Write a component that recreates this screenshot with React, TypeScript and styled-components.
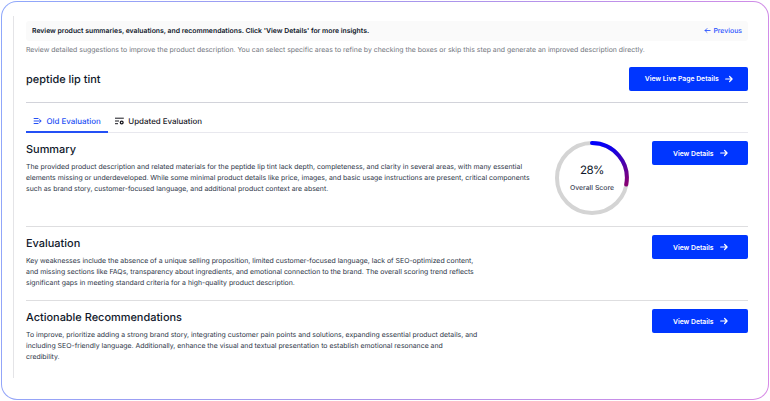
import React from "react";
import styled, { createGlobalStyle } from "styled-components";

const GlobalStyle = createGlobalStyle`
  * { box-sizing: border-box; }
  html, body { margin: 0; padding: 0; background: #fff; }
  body { font-family: Inter, "Liberation Sans", sans-serif; color: #0f172a; text-rendering: geometricPrecision; }
  h1, h2, p { margin: 0; }
  button { font-family: inherit; }
`;

const Page = styled.div`
  width: 770px;
  height: 401px;
  padding: 1px;
  overflow: hidden;
`;

const Frame = styled.div`
  width: 768px;
  height: 399px;
  padding: 14px 0 0 11px;
  border: 1px solid transparent;
  border-radius: 16px;
  background:
    linear-gradient(#fff, #fff) padding-box,
    linear-gradient(100deg, #8fa8fb 0%, #a896ec 50%, #d88ae6 100%) border-box;
`;

const Panel = styled.main`
  height: 362px;
  width: 735px;
  border-left: 1px solid #e4e4e7;
  padding: 5px 0 0 12px;
`;

const Notice = styled.div`
  display: flex;
  align-items: center;
  justify-content: space-between;
  height: 20px;
  padding: 0 6px 0 6px;
  border-radius: 3px;
  background: #fafafa;
`;

const NoticeText = styled.p`
  font-size: 6.86px;
  font-weight: 600;
  line-height: 20px;
  white-space: nowrap;
`;

const BackLink = styled.a`
  display: flex;
  align-items: center;
  gap: 2.5px;
  margin-top: -1px;
  font-size: 6.9px;
  font-weight: 500;
  color: #2952ff;
`;

const Hint = styled.p`
  margin-top: 3px;
  font-size: 6.91px;
  line-height: 11px;
  color: #71757d;
  white-space: nowrap;
`;

const TitleRow = styled.header`
  display: flex;
  justify-content: space-between;
  align-items: center;
  height: 48px;
  border-bottom: 1px solid #d2d3da;
`;

const Title = styled.h1`
  font-size: 10.95px;
  font-weight: 500;
  line-height: 16px;
`;

const Button = styled.button<{ $wide?: boolean }>`
  display: flex;
  flex: none;
  align-items: center;
  justify-content: center;
  gap: 6.5px;
  width: ${(p) => (p.$wide ? 119 : 96)}px;
  height: 24px;
  padding: 0 0 0 1px;
  border: 0;
  border-radius: 2px;
  background: #0036ff;
  color: #fff;
  font-size: 6.8px;
  font-weight: 600;
`;

const Tabs = styled.nav`
  display: flex;
  height: 30px;
  border-bottom: 1px solid #e8e8ee;
`;

const Tab = styled.a<{ $active?: boolean }>`
  display: flex;
  align-items: center;
  gap: 4.5px;
  height: 30px;
  padding: 9px 7px 2px;
  font-size: 7.93px;
  font-weight: 500;
  line-height: 12px;
  color: ${(p) => (p.$active ? "#2450f5" : "#18181f")};
  border-bottom: 2px solid ${(p) => (p.$active ? "#2450f5" : "transparent")};
`;

const Section = styled.section<{ $height: number; $last?: boolean }>`
  display: flex;
  justify-content: space-between;
  height: ${(p) => p.$height}px;
  padding-top: 8px;
  border-bottom: ${(p) => (p.$last ? "0" : "1px solid #dedee0")};
`;

const Copy = styled.div`
  flex: 1;
`;

const Heading = styled.h2`
  font-size: 10.95px;
  font-weight: 500;
  line-height: 17px;
`;

const Body = styled.p`
  margin-top: 3px;
  font-size: 6.91px;
  line-height: 11px;
  color: #2b3446;
  white-space: pre;
`;

const Gauge = styled.div`
  display: grid;
  width: 74px;
  height: 74px;
  margin-right: 23px;
  place-items: center;
  > * { grid-area: 1 / 1; }
`;

const GaugeText = styled.div`
  display: flex;
  flex-direction: column;
  align-items: center;
  gap: 6px;
  padding-bottom: 1px;
`;

const Percent = styled.span`
  font-size: 11.6px;
  line-height: 14px;
  letter-spacing: -0.6px;
`;

const GaugeLabel = styled.span`
  font-size: 6.85px;
  line-height: 10px;
  font-weight: 500;
  color: #3a4254;
`;

const Arrow = ({ back = false }: { back?: boolean }) => (
  <svg width={back ? 7 : 8} height={back ? 7 : 8} viewBox="0 0 8 8" fill="none" stroke="currentColor" strokeWidth={back ? 1 : 1.2} strokeLinecap="round" strokeLinejoin="round">
    <path d={back ? "M7 4H1.2M3.4 1.8 1.2 4l2.2 2.2" : "M.7 4h6.4M4.6 1.5 7.1 4 4.6 6.5"} />
  </svg>
);

const MergeIcon = () => (
  <svg width="9" height="8" viewBox="0 0 9 8" fill="none" stroke="currentColor" strokeWidth="1">
    <path d="M.7 1.5h4.8M.7 4h7.4M.7 6.5h4.8M6.3 2.2 8.2 4 6.3 5.8" />
  </svg>
);

const ListCheckIcon = () => (
  <svg width="9" height="8" viewBox="0 0 9 8" fill="none" stroke="currentColor" strokeWidth="1">
    <path d="M0 1.2h8.8M0 4h4M0 6.7h3" />
    <circle cx="6.7" cy="5.5" r="1.4" strokeWidth="1.3" />
  </svg>
);

const Ring = () => (
  <svg width="74" height="74" viewBox="0 0 74 74" fill="none" strokeWidth="4">
    <defs>
      <linearGradient id="score" x1="37" y1="2" x2="70" y2="44" gradientUnits="userSpaceOnUse">
        <stop offset="0" stopColor="#0000ff" />
        <stop offset=".35" stopColor="#1400e4" />
        <stop offset="1" stopColor="#870073" />
      </linearGradient>
    </defs>
    <circle cx="37" cy="37" r="35" stroke="#d4d4d4" />
    <path d="M37 2A35 35 0 0 1 71.2 43.6" stroke="url(#score)" strokeLinecap="round" />
  </svg>
);

const Details = () => (
  <Button>View Details <Arrow /></Button>
);

export default function App() {
  return (
    <Page>
      <GlobalStyle />
      <Frame>
        <Panel>
          <Notice>
            <NoticeText>Review product summaries, evaluations, and recommendations. Click 'View Details' for more insights.</NoticeText>
            <BackLink><Arrow back />Previous</BackLink>
          </Notice>
          <Hint>Review detailed suggestions to improve the product description. You can select specific areas to refine by checking the boxes or skip this step and generate an improved description directly.</Hint>
          <TitleRow>
            <Title>peptide lip tint</Title>
            <Button $wide>View Live Page Details <Arrow /></Button>
          </TitleRow>
          <Tabs>
            <Tab $active><MergeIcon />Old Evaluation</Tab>
            <Tab><ListCheckIcon />Updated Evaluation</Tab>
          </Tabs>
          <Section $height={94}>
            <Copy>
              <Heading>Summary</Heading>
              <Body>{`The provided product description and related materials for the peptide lip tint lack depth, completeness, and clarity in several areas, with many essential
elements missing or underdeveloped. While some minimal product details like price, images, and basic usage instructions are present, critical components
such as brand story, customer-focused language, and additional product context are absent.`}</Body>
            </Copy>
            <Gauge>
              <Ring />
              <GaugeText>
                <Percent>28%</Percent>
                <GaugeLabel>Overall Score</GaugeLabel>
              </GaugeText>
            </Gauge>
            <Details />
          </Section>
          <Section $height={74}>
            <Copy>
              <Heading>Evaluation</Heading>
              <Body>{`Key weaknesses include the absence of a unique selling proposition, limited customer-focused language, lack of SEO-optimized content,
and missing sections like FAQs, transparency about ingredients, and emotional connection to the brand. The overall scoring trend reflects
significant gaps in meeting standard criteria for a high-quality product description.`}</Body>
            </Copy>
            <Details />
          </Section>
          <Section $height={74} $last>
            <Copy>
              <Heading>Actionable Recommendations</Heading>
              <Body>{`To improve, prioritize adding a strong brand story, integrating customer pain points and solutions, expanding essential product details, and
including SEO-friendly language. Additionally, enhance the visual and textual presentation to establish emotional resonance and
credibility.`}</Body>
            </Copy>
            <Details />
          </Section>
        </Panel>
      </Frame>
    </Page>
  );
}
